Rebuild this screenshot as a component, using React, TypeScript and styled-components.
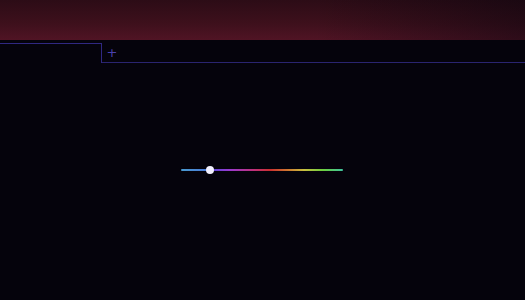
import styled, { createGlobalStyle } from 'styled-components'

const GlobalStyle = createGlobalStyle`
  html, body {
    margin: 0;
    padding: 0;
    background: #05030c;
    font-family: 'Liberation Sans', Arial, sans-serif;
  }
`

export default function App() {
  return (
    <>
      <GlobalStyle />
      <Page>
        <Header />
        <TabBar>
          <Tab />
          <AddTab>+</AddTab>
          <TabFill />
        </TabBar>
        <Stage>
          <Slider>
            <Track />
            <Thumb style={{ left: '18%' }} />
          </Slider>
        </Stage>
      </Page>
    </>
  )
}

const Page = styled.div`
  display: flex;
  flex-direction: column;
  width: 525px;
  height: 300px;
  overflow: hidden;
  background: #05030c;
`
const Header = styled.div`
  height: 40px;
  flex-shrink: 0;
  background:
    linear-gradient(90deg, rgba(5, 3, 12, 0) 60%, rgba(5, 3, 12, 0.45) 100%),
    linear-gradient(180deg, #2c0c16 0%, #3e101c 60%, #501424 100%);
`
const TabBar = styled.div`
  display: flex;
  align-items: stretch;
  height: 20px;
  margin-top: 3px;
`
const Tab = styled.div`
  width: 101px;
  border-top: 1px solid #302882;
  border-right: 1px solid #302882;
`
const AddTab = styled.div`
  display: flex;
  align-items: center;
  justify-content: center;
  width: 20px;
  font-family: 'DejaVu Sans', sans-serif;
  font-size: 13px;
  line-height: 1;
  color: #4a40b0;
  border-bottom: 1px solid #2a2470;
`
const TabFill = styled.div`
  flex: 1;
  border-bottom: 1px solid #2a2470;
`
const Stage = styled.div`
  flex: 1;
  display: flex;
  justify-content: center;
  padding-top: 106px;
`
const Slider = styled.div`
  position: relative;
  width: 162px;
  height: 2px;
  margin-left: -1px;
`
const Track = styled.div`
  height: 2px;
  border-radius: 1px;
  background: linear-gradient(
    90deg,
    #4a9ad0 0%,
    #4a7ad8 16%,
    #6048d8 20%,
    #9a3ad0 30%,
    #c0307a 45%,
    #cc3030 55%,
    #d07830 66%,
    #c8c040 76%,
    #6ad040 88%,
    #40c4a0 100%
  );
`
const Thumb = styled.div`
  position: absolute;
  top: -3px;
  width: 8px;
  height: 8px;
  margin-left: -4px;
  border-radius: 50%;
  background: #f2f0ff;
`
